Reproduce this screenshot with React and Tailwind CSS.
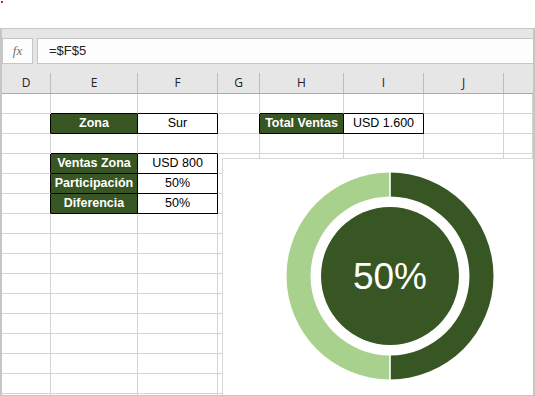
import React from 'react';

const COLS = ['D', 'E', 'F', 'G', 'H', 'I', 'J', ''];
const ROW_COUNT = 16;

// cells with content: key "row-col"
const CELLS = {
  '1-1': { text: 'Zona', label: true },
  '1-2': { text: 'Sur' },
  '1-4': { text: 'Total Ventas', label: true },
  '1-5': { text: 'USD 1.600' },
  '3-1': { text: 'Ventas Zona', label: true },
  '3-2': { text: 'USD 800' },
  '4-1': { text: 'Participación', label: true },
  '4-2': { text: '50%' },
  '5-1': { text: 'Diferencia', label: true },
  '5-2': { text: '50%' },
};

const boxed = (r, c) => Boolean(CELLS[`${r}-${c}`]);

function Cell({ r, c }) {
  const cell = CELLS[`${r}-${c}`];
  const rightBlack = boxed(r, c) || boxed(r, c + 1);
  const bottomBlack = boxed(r, c) || boxed(r + 1, c);
  return (
    <div
      className={`h-[20px] border-r border-b flex items-center justify-center whitespace-nowrap ${
        rightBlack ? 'border-r-black' : 'border-r-[#d4d4d4]'
      } ${bottomBlack ? 'border-b-black' : 'border-b-[#d4d4d4]'} ${
        cell && cell.label ? 'bg-[#375623] text-white font-bold text-[12.5px]' : 'bg-white text-black text-[12.5px]'
      }`}
    >
      {cell ? cell.text : ''}
    </div>
  );
}

function Donut() {
  const cx = 167;
  const cy = 117;
  const ro = 103.5;
  const ri = 79.5;
  const right = `M ${cx} ${cy - ro} A ${ro} ${ro} 0 0 1 ${cx} ${cy + ro} L ${cx} ${cy + ri} A ${ri} ${ri} 0 0 0 ${cx} ${cy - ri} Z`;
  const left = `M ${cx} ${cy - ro} A ${ro} ${ro} 0 0 0 ${cx} ${cy + ro} L ${cx} ${cy + ri} A ${ri} ${ri} 0 0 1 ${cx} ${cy - ri} Z`;
  return (
    <svg width="313" height="237" viewBox="0 0 313 237" className="block">
      <path d={left} fill="#a9d18e" />
      <path d={right} fill="#375623" />
      <line x1={cx} y1={cy - ro - 1} x2={cx} y2={cy - ri + 1} stroke="#ffffff" strokeWidth="1.6" />
      <line x1={cx} y1={cy + ri - 1} x2={cx} y2={cy + ro + 1} stroke="#ffffff" strokeWidth="1.6" />
      <circle cx={cx} cy={cy} r="69" fill="#375623" />
      <text
        x={cx}
        y={cy + 13}
        textAnchor="middle"
        fill="#ffffff"
        fontSize="37"
        fontFamily="'Liberation Sans', Arial, sans-serif"
      >
        50%
      </text>
    </svg>
  );
}

export default function App() {
  return (
    <div className="relative w-[535px] h-[396px] overflow-hidden bg-white font-['Liberation_Sans',Arial,sans-serif]">
      {/* stray red pixel */}
      <div className="h-[27px]">
        <div className="w-[2px] h-[2px] ml-[1px] mt-[1px] bg-[#e02020]" />
      </div>

      <div className="h-[369px] flex flex-col border-t border-l-2 border-r-2 border-b-2 border-[#c6c6c6] bg-[#e6e6e6]">
        {/* gray band */}
        <div className="h-[9px]" />

        {/* formula bar */}
        <div className="flex h-[26px]">
          <div className="w-[31px] border border-[#c6c6c6] bg-[#fdfdfd] flex items-center justify-center">
            <span className="font-['Liberation_Serif',serif] italic text-[13px] text-[#707070]">fx</span>
          </div>
          <div className="w-[4px]" />
          <div className="flex-1 border border-r-0 border-[#c6c6c6] bg-[#fdfdfd] flex items-center pl-[11px]">
            <span className="text-[13px] text-[#222]">=$F$5</span>
          </div>
        </div>

        {/* column headers */}
        <div className="h-[30px] pt-[9px] border-b border-[#ababab]">
          <div className="grid grid-cols-[49px_87px_80px_42px_84px_80px_80px_1fr] h-[20px]">
            {COLS.map((c, i) => (
              <div
                key={i}
                className={`flex items-center justify-center text-[12px] text-[#222] font-['Open_Sans',sans-serif] ${
                  i < COLS.length - 1 ? 'border-r border-[#bdbdbd]' : ''
                }`}
              >
                {c}
              </div>
            ))}
          </div>
        </div>

        {/* sheet grid */}
        <div className="relative flex-1 overflow-hidden bg-white">
          <div className="grid grid-cols-[49px_87px_80px_42px_84px_80px_80px_1fr]">
            {Array.from({ length: ROW_COUNT }).map((_, r) =>
              COLS.map((_, c) => <Cell key={`${r}-${c}`} r={r} c={c} />)
            )}
          </div>

          {/* floating chart object */}
          <div className="absolute left-[220px] top-[64px] w-[313px] h-[240px] bg-white border border-[#d9d9d9]">
            <Donut />
          </div>
        </div>
      </div>
    </div>
  );
}
